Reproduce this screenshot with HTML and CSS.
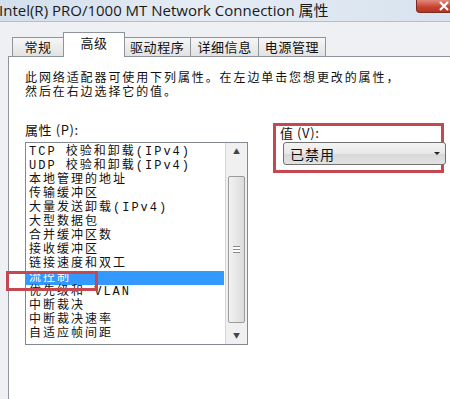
FILE: index.html
```html
<!DOCTYPE html>
<html lang="zh-CN">
<head>
    <meta charset="UTF-8">
    <title>Intel(R) PRO/1000 MT Network Connection 属性</title>
    <link rel="stylesheet" href="styles.css">
</head>
<body>
    <div class="window">
        <div class="titlebar">
            <span class="title">Intel(R) PRO/1000 MT Network Connection 属性</span>
            <span class="close">
                <svg width="14" height="10" viewBox="0 0 14 10">
                    <path d="M2 1 L10 9 M10 1 L2 9" stroke="#fff" stroke-width="2.2" fill="none"/>
                </svg>
            </span>
        </div>

        <div class="tabs">
            <div class="tab">常规</div>
            <div class="tab active">高级</div>
            <div class="tab">驱动程序</div>
            <div class="tab">详细信息</div>
            <div class="tab">电源管理</div>
        </div>

        <div class="panel">
            <p class="desc">此网络适配器可使用下列属性。在左边单击您想更改的属性，<br>然后在右边选择它的值。</p>

            <div class="props">
                <div class="prop-list">
                    <div class="label">属性 (P):</div>
                    <div class="listbox">
                        <ul class="items">
                            <li>TCP 校验和卸载(IPv4)</li>
                            <li>UDP 校验和卸载(IPv4)</li>
                            <li>本地管理的地址</li>
                            <li>传输缓冲区</li>
                            <li>大量发送卸载(IPv4)</li>
                            <li>大型数据包</li>
                            <li>合并缓冲区数</li>
                            <li>接收缓冲区</li>
                            <li>链接速度和双工</li>
                            <li class="selected">流控制</li>
                            <li>优先级和 VLAN</li>
                            <li>中断裁决</li>
                            <li>中断裁决速率</li>
                            <li>自适应帧间距</li>
                        </ul>
                        <div class="scrollbar">
                            <div class="sb-btn">&#9650;</div>
                            <div class="sb-track">
                                <div class="thumb"><span class="grip"></span></div>
                            </div>
                            <div class="sb-btn">&#9660;</div>
                        </div>
                        <div class="mark mark-item"></div>
                    </div>
                </div>

                <div class="prop-value mark">
                    <div class="label">值 (V):</div>
                    <div class="select">
                        <span>已禁用</span>
                        <span class="arrow"></span>
                    </div>
                </div>
            </div>
        </div>
    </div>
</body>
</html>
```

FILE: styles.css
```css
/* General Styles */
body {
  margin: 0;
  padding: 0;
  font-family: "Noto Sans CJK SC", sans-serif;
  color: #111;
  background-color: #eef0f3;
}

.window {
  width: 450px;
  height: 399px;
  overflow: hidden;
  background-color: #eef0f3;
}

/* Title bar */
.titlebar {
  display: flex;
  height: 21px;
  border-bottom: 1px solid #b4bfcc;
  background: linear-gradient(90deg, #d3dfed 0%, #e4ecf5 45%, #d8e3ef 100%);
}

.title {
  font-family: "Open Sans", "Noto Sans CJK SC", sans-serif;
  font-size: 15px;
  line-height: 21px;
  color: #1a1a1a;
  white-space: nowrap;
  margin-left: -1px;
}

.close {
  display: flex;
  align-items: center;
  margin-left: auto;
  align-self: flex-start;
  box-sizing: border-box;
  width: 34px;
  height: 13px;
  padding-left: 21px;
  border: 1px solid #7a2a20;
  border-top: none;
  border-right: none;
  border-radius: 0 0 0 4px;
  background: linear-gradient(#e08a7c, #c6412f 60%, #b53424);
  overflow: hidden;
}

.close svg {
  flex-shrink: 0;
}

/* Tabs */
.tabs {
  display: flex;
  align-items: flex-end;
  height: 34px;
  padding-left: 12px;
}

.tab {
  box-sizing: border-box;
  height: 19px;
  min-width: 52px;
  padding: 0 6px;
  border: 1px solid #8f939c;
  border-bottom: none;
  border-left-width: 0;
  background: linear-gradient(#f6f6f6, #e2e2e2);
  font-size: 13px;
  letter-spacing: 0.6px;
  line-height: 18px;
  text-align: center;
}

.tab:first-child {
  border-left-width: 1px;
}

.tab.active {
  position: relative;
  top: 1px;
  height: 25px;
  min-width: 62px;
  margin: 0 -1px 0 -1px;
  border-left-width: 1px;
  background: #ffffff;
  line-height: 20px;
  z-index: 1;
}

/* Panel */
.panel {
  height: 360px;
  margin-left: 8px;
  padding-left: 16px;
  border-top: 1px solid #8f939c;
  border-left: 1px solid #8f939c;
  background-color: #ffffff;
}

.desc {
  margin: 0;
  padding-top: 15px;
  font-family: "Liberation Sans", "Noto Sans CJK SC", sans-serif;
  font-size: 12px;
  letter-spacing: 1.9px;
  line-height: 13.5px;
}

.props {
  display: flex;
  margin-top: 24px;
}

.label {
  font-size: 13px;
  letter-spacing: 0.6px;
  line-height: 14px;
}

/* Property list */
.prop-list {
  width: 223px;
}

.prop-list .label {
  margin-bottom: 5px;
}

.listbox {
  position: relative;
  display: flex;
  height: 201px;
  border: 1px solid #828790;
}

.items {
  flex: 1;
  margin: 0;
  padding: 2px 1px 0 0;
  list-style: none;
  font-family: "Liberation Mono", "Noto Sans CJK SC", monospace;
  font-size: 12px;
  letter-spacing: 2px;
  line-height: 14px;
  white-space: nowrap;
}

.items li {
  padding-left: 3px;
  height: 14px;
}

.items li.selected {
  background-color: #3399ff;
  color: #ffffff;
}

.scrollbar {
  display: flex;
  flex-direction: column;
  width: 21px;
  border-left: 1px solid #d5d5d5;
  background-color: #f0f0f0;
}

.sb-btn {
  height: 17px;
  font-size: 7px;
  line-height: 17px;
  text-align: center;
  color: #444;
}

.sb-track {
  flex: 1;
}

.thumb {
  display: flex;
  align-items: center;
  justify-content: center;
  height: 145px;
  margin: 16px 2px 0 2px;
  border: 1px solid #9b9b9b;
  border-radius: 2px;
  background: linear-gradient(90deg, #f2f2f2, #dcdcdc);
}

.grip {
  width: 7px;
  height: 5px;
  border-top: 1px solid #8a8a8a;
  border-bottom: 1px solid #8a8a8a;
  background: linear-gradient(#fff 0 2px, #8a8a8a 2px 3px, #fff 3px);
}

/* Value box */
.prop-value {
  width: 161px;
  height: 44px;
  margin-left: 25px;
  padding-left: 4px;
}

.prop-value .label {
  line-height: 13px;
  margin-bottom: 3px;
}

.select {
  display: flex;
  align-items: center;
  box-sizing: border-box;
  width: 163px;
  height: 23px;
  margin-left: 3px;
  padding: 0 5px 0 6px;
  border: 1px solid #707070;
  border-radius: 3px;
  background: linear-gradient(#f4f4f4, #e8e8e8 50%, #d8d8d8 51%, #e2e2e2);
  font-size: 14px;
  letter-spacing: 1px;
}

.arrow {
  margin-left: auto;
  width: 0;
  height: 0;
  border-left: 3px solid transparent;
  border-right: 3px solid transparent;
  border-top: 3px solid #222;
}

/* Red highlight annotations */
.mark {
  border: 3px solid #c5474f;
}

.mark-item {
  position: absolute;
  left: -20px;
  top: 128px;
  width: 86px;
  height: 14px;
}
```
